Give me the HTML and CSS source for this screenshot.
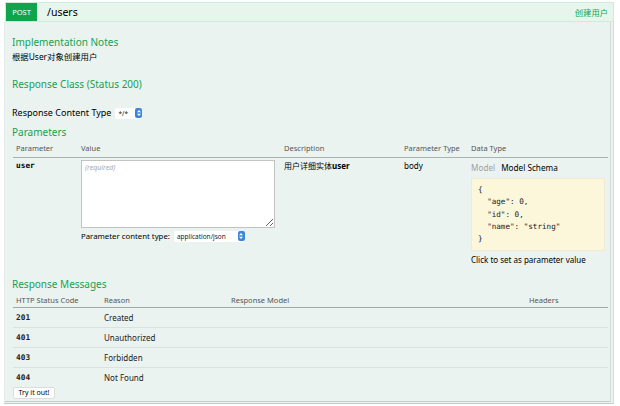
FILE: index.html
```html
<!DOCTYPE html>
<html>
<head>
<meta charset="utf-8">
<link rel="stylesheet" href="styles.css">
</head>
<body>
<div class="op">
  <div class="heading">
    <span class="method">POST</span>
    <span class="path">/users</span>
    <span class="summary">创建用户</span>
  </div>
  <div class="content">
    <h4 class="h first">Implementation Notes</h4>
    <p class="notes">根据User对象创建用户</p>
    <h4 class="h rc">Response Class (Status 200)</h4>
    <div class="rct">
      <span>Response Content Type</span>
      <span class="sel small"><span class="sel-text">*/*</span><span class="sel-btn"><svg width="6" height="8" viewBox="0 0 6 8"><path d="M1 3.3 L3 1 L5 3.3 Z M1 4.7 L3 7 L5 4.7 Z" fill="#fff"/></svg></span></span>
    </div>
    <h4 class="h params-h">Parameters</h4>
    <table class="params">
      <colgroup><col class="c1"><col class="c2"><col class="c3"><col class="c4"><col class="c5"></colgroup>
      <thead>
        <tr><th>Parameter</th><th>Value</th><th>Description</th><th>Parameter Type</th><th>Data Type</th></tr>
      </thead>
      <tbody>
        <tr>
          <td class="pname">user</td>
          <td>
            <textarea class="body-ta" placeholder="(required)"></textarea>
            <div class="pct">
              <span>Parameter content type:</span>
              <span class="sel wide"><span class="sel-text">application/json</span><span class="sel-btn"><svg width="6" height="8" viewBox="0 0 6 8"><path d="M1 3.3 L3 1 L5 3.3 Z M1 4.7 L3 7 L5 4.7 Z" fill="#fff"/></svg></span></span>
            </div>
          </td>
          <td class="desc">用户详细实体<b>user</b></td>
          <td class="ptype">body</td>
          <td class="dtype">
            <div class="tabs"><span class="tab-off">Model</span><span class="tab-on">Model Schema</span></div>
            <pre class="schema">{
  "age": 0,
  "id": 0,
  "name": "string"
}</pre>
            <div class="click">Click to set as parameter value</div>
          </td>
        </tr>
      </tbody>
    </table>
    <h4 class="h rm">Response Messages</h4>
    <table class="resp">
      <colgroup><col class="r1"><col class="r2"><col class="r3"><col class="r4"></colgroup>
      <thead>
        <tr><th>HTTP Status Code</th><th>Reason</th><th>Response Model</th><th>Headers</th></tr>
      </thead>
      <tbody>
        <tr><td class="code">201</td><td>Created</td><td></td><td></td></tr>
        <tr><td class="code">401</td><td>Unauthorized</td><td></td><td></td></tr>
        <tr><td class="code">403</td><td>Forbidden</td><td></td><td></td></tr>
        <tr><td class="code">404</td><td>Not Found</td><td></td><td></td></tr>
      </tbody>
    </table>
    <div class="try"><button class="try-btn">Try it out!</button></div>
  </div>
</div>
</body>
</html>
```
FILE: styles.css
```css
* { box-sizing: border-box; }
html, body { margin: 0; padding: 0; background: #ffffff; }
body {
  width: 620px;
  height: 406px;
  overflow: hidden;
  font-family: "Noto Sans", "Noto Sans CJK SC", sans-serif;
  font-size: 8px;
  color: #000;
}
.op {
  padding: 2px 0 0 4px;
  width: 614px;
}
.heading {
  display: flex;
  align-items: center;
  margin-left: 1px;
  height: 20px;
  background: #e7f6ec;
  border: 1px solid #cfeadb;
}
.method {
  background: #10a54a;
  color: #fff;
  font-size: 7.5px;
  height: 18px;
  width: 31px;
  display: flex;
  align-items: center;
  justify-content: center;
}
.path {
  font-size: 10.5px;
  margin-left: 10px;
  flex: 1;
}
.summary {
  color: #10a54a;
  font-family: "Noto Sans CJK SC", sans-serif;
  font-size: 8.3px;
  margin-right: 5px;
}
.content {
  background: #ebf3f0;
  border: 1px solid #e3ece8;
  border-top: none;
  border-right: 4px double #d2ddd9;
  border-bottom: 3px double #c4cdca;
  padding: 13px 0 0 7px;
  height: 382px;
}
.h {
  margin: 0;
  color: #17a050;
  font-weight: normal;
  font-size: 10px;
  line-height: 14px;
}
.notes {
  margin: 1px 0 0 0;
  font-size: 8.4px;
  line-height: 14px;
}
.h.rc { margin-top: 13px; }
.rct {
  margin-top: 15px;
  display: flex;
  align-items: center;
  gap: 3px;
  font-size: 9px;
  line-height: 14px;
}
.sel {
  display: inline-flex;
  align-items: center;
  justify-content: space-between;
  background: #fff;
  border-radius: 2px;
  height: 11px;
  padding: 0 0 0 3px;
}
.sel-text { font-size: 6.5px; line-height: 11px; color: #222; }
.sel-btn {
  display: inline-flex;
  align-items: center;
  justify-content: center;
  width: 7px;
  height: 10px;
  background: #3d86dc;
  border-radius: 2px;
}
.sel.small { width: 27px; margin-left: 1px; }
.h.params-h { margin-top: 5px; }
table {
  border-collapse: collapse;
  table-layout: fixed;
  width: 595px;
  margin-left: 1px;
}
th {
  text-align: left;
  font-weight: normal;
  color: #555;
  font-size: 7.5px;
  white-space: nowrap;
  padding: 3px 3px 3px 3px;
  line-height: 12px;
  border-bottom: 1px solid #a9b3b0;
}
.params col.c1 { width: 65px; }
.params col.c2 { width: 203px; }
.params col.c3 { width: 120px; }
.params col.c4 { width: 67px; }
.params col.c5 { width: 140px; }
.params td {
  vertical-align: top;
  padding: 2px 3px 0 3px;
  font-size: 8px;
  line-height: 11px;
}
.params td.pname {
  font-family: "DejaVu Sans Mono", monospace;
  font-weight: bold;
  font-size: 7.8px;
}
.body-ta {
  display: block;
  width: 194px;
  height: 68px;
  border: 1px solid #c2c2c2;
  background: #fff;
  resize: both;
  margin: 0;
  padding: 2px 3px;
  font-family: "Noto Sans", sans-serif;
  font-size: 7px;
  font-style: italic;
}
.body-ta::placeholder { color: #aaa; font-style: italic; }
.pct {
  margin-top: 2px;
  display: flex;
  align-items: center;
  gap: 4px;
  font-size: 7.8px;
  line-height: 12px;
}
.sel.wide { width: 71px; }
.desc b { font-weight: bold; }
.tabs {
  display: flex;
  gap: 6px;
  margin-top: 2px;
  font-size: 8.2px;
  line-height: 12px;
}
.tab-off { color: #a0a0a0; }
.tab-on { color: #000; }
.schema {
  margin: 4px 0 0 0;
  background: #fcf6db;
  border: 1px solid #f0ead0;
  padding: 5px 6px 5px 6px;
  font-family: "DejaVu Sans Mono", monospace;
  font-size: 7.6px;
  line-height: 12.3px;
  height: 73px;
  color: #222;
}
.click {
  font-size: 8px;
  margin-top: 3px;
  line-height: 12px;
}
.h.rm { margin-top: 11px; }
.resp col.r1 { width: 88px; }
.resp col.r2 { width: 127px; }
.resp col.r3 { width: 298px; }
.resp col.r4 { width: 82px; }
.resp th { padding: 3px 3px 1px 3px; border-bottom-color: #9fa9a6; }
.resp td {
  font-size: 8px;
  padding: 0 3px;
  height: 20px;
  line-height: 12px;
  color: #222;
  border-bottom: 1px solid #d8e2de;
}
.resp tbody tr:last-child td { border-bottom: none; }
.resp td.code {
  font-family: "DejaVu Sans Mono", monospace;
  font-weight: bold;
  font-size: 7.8px;
}
.try { margin-top: -1px; margin-left: 1px; display: flex; }
.try-btn {
  font-family: "Noto Sans", sans-serif;
  font-size: 7px;
  color: #000;
  background: #fff;
  border: 1px solid #ddd;
  border-radius: 2px;
  padding: 0 3px;
  height: 12px;
  line-height: 10px;
  width: 42px;
}
```
